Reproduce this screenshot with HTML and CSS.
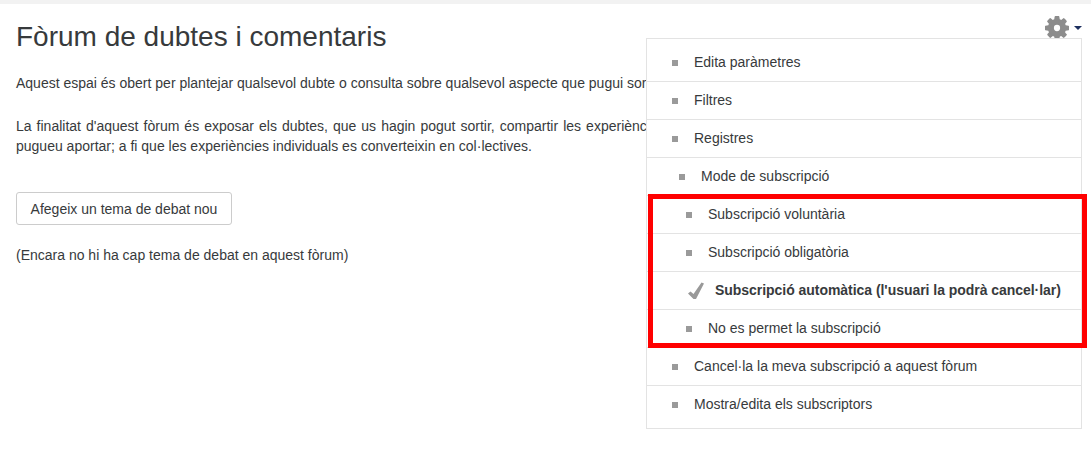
FILE: index.html
```html
<!DOCTYPE html>
<html lang="ca">

<head>
    <meta charset="UTF-8">
    <meta name="viewport" content="width=device-width, initial-scale=1.0">
    <link rel="stylesheet" href="styles.css">
    <title>Fòrum de dubtes i comentaris</title>
</head>

<body>
    <div class="top-strip"></div>
    <main class="page">
        <h1>Fòrum de dubtes i comentaris</h1>
        <div class="intro">
            <p>Aquest espai és obert per plantejar qualsevol dubte o consulta sobre qualsevol aspecte que pugui sorgir al llarg del curs i de les seves activitats.</p>
            <p>La finalitat d'aquest fòrum és exposar els dubtes, que us hagin pogut sortir, compartir les experiències que aneu fent durant el curs, totes les reflexions i les idees que pugueu aportar; a fi que les experiències individuals es converteixin en col·lectives.</p>
        </div>
        <button class="btn-new" type="button">Afegeix un tema de debat nou</button>
        <p class="empty">(Encara no hi ha cap tema de debat en aquest fòrum)</p>

        <button class="gear-btn" type="button" aria-label="Configuració">
            <svg class="gear" viewBox="0 0 1536 1536">
                <path d="M968 768a200 200 0 1 0-400 0 200 200 0 1 0 400 0zm568-109v222q0 12-8 23t-20 13l-185 28q-19 54-39 91 35 50 107 138 10 12 10 25t-9 23q-27 37-99 108t-94 71q-12 0-26-9l-138-108q-44 23-91 38-16 136-29 186-7 28-36 28h-222q-14 0-24.500-8.500t-11.500-21.500l-28-184q-49-16-90-37l-141 107q-10 9-25 9-14 0-25-11-126-114-165-168-7-10-7-23 0-12 8-23 15-21 51-66.500t54-70.500q-27-50-41-99l-183-27q-13-2-21-12.500t-8-23.500v-222q0-12 8-23t19-13l186-28q14-46 39-92-40-57-107-138-10-12-10-24 0-10 9-23 26-36 98.500-107.500t94.500-71.500q13 0 26 10l138 107q44-23 91-38 16-136 29-186 7-28 36-28h222q14 0 24.500 8.500t11.500 21.500l28 184q49 16 90 37l142-107q9-9 24-9 13 0 25 10 129 119 165 170 7 8 7 22 0 12-8 23-15 21-51 66.500t-54 70.500q26 50 41 98l183 28q13 2 21 12.500t8 23.500z"/>
            </svg>
            <span class="caret"></span>
        </button>

        <div class="menu">
            <ul>
                <li><span class="dot"></span>Edita paràmetres</li>
                <li><span class="dot"></span>Filtres</li>
                <li><span class="dot"></span>Registres</li>
                <li class="sub"><span class="dot"></span>Mode de subscripció</li>
                <li class="sub2"><span class="dot"></span>Subscripció voluntària</li>
                <li class="sub2"><span class="dot"></span>Subscripció obligatòria</li>
                <li class="sub2 active">
                    <svg class="check" viewBox="0 0 20 20">
                        <path d="M1 12.500l2.500-2 3 2.500 8-11.500 2.500 1-8 15.500h-2.500z"/>
                    </svg>
                    Subscripció automàtica (l'usuari la podrà cancel·lar)
                </li>
                <li class="sub2"><span class="dot"></span>No es permet la subscripció</li>
                <li><span class="dot"></span>Cancel·la la meva subscripció a aquest fòrum</li>
                <li><span class="dot"></span>Mostra/edita els subscriptors</li>
            </ul>
            <div class="highlight"></div>
        </div>
    </main>
</body>

</html>
```

FILE: styles.css
```css
* {
    margin: 0;
    padding: 0;
    box-sizing: border-box;
}

html,
body {
    height: 100%;
    overflow: hidden;
}

body {
    background-color: white;
    color: #373a3c;
    font-family: "Liberation Sans", Arial, sans-serif;
    font-size: 14px;
    line-height: 20px;
}

.top-strip {
    height: 4px;
    background-color: #f2f2f2;
}

.page {
    position: relative;
    padding: 15px 16px 0;
}

h1 {
    font-size: 28px;
    font-weight: 400;
    line-height: 36px;
    margin-bottom: 18px;
}

.intro {
    text-align: justify;
    margin-bottom: 36px;
}

.intro p {
    margin-bottom: 22px;
}

.intro p:first-child {
    margin-bottom: 23px;
}

.btn-new {
    display: block;
    width: 216px;
    height: 33px;
    margin-bottom: 20px;
    border: 1px solid #ccc;
    border-radius: 3px;
    background-color: white;
    color: #373a3c;
    font-family: inherit;
    font-size: 14px;
}

.gear-btn {
    position: absolute;
    top: 12px;
    right: 9px;
    display: flex;
    align-items: center;
    gap: 5px;
    border: none;
    background: none;
}

.gear {
    width: 24px;
    height: 24px;
    fill: #8c8c8c;
}

.caret {
    width: 0;
    height: 0;
    border-left: 4px solid transparent;
    border-right: 4px solid transparent;
    border-top: 4px solid #1d2f5f;
}

.menu {
    position: absolute;
    top: 34px;
    left: 646px;
    width: 436px;
    height: 391px;
    padding: 5px 0;
    background-color: white;
    border: 1px solid #e3e3e3;
}

.menu ul {
    list-style: none;
}

.menu li {
    display: flex;
    align-items: center;
    height: 38px;
    padding-left: 25px;
    padding-bottom: 2px;
    border-bottom: 1px solid #e3e3e3;
}

.menu li:last-child {
    border-bottom: none;
}

.menu li.sub {
    padding-left: 32px;
}

.menu li.sub2 {
    padding-left: 39px;
}

.menu li.active {
    font-weight: 700;
    padding-left: 40px;
    letter-spacing: -0.04px;
}

.dot {
    width: 6px;
    height: 6px;
    margin-top: 2px;
    margin-right: 16px;
    background-color: #9a9a9a;
}

.check {
    width: 20px;
    height: 20px;
    margin-top: 2px;
    margin-right: 8px;
    fill: #999;
}

.highlight {
    position: absolute;
    top: 155px;
    left: 1px;
    width: 439px;
    height: 154px;
    border: 5px solid red;
}
```
